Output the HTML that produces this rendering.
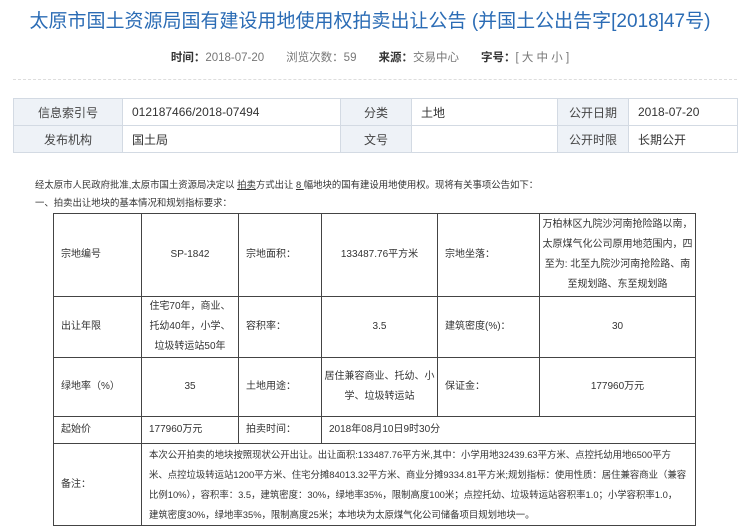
<!DOCTYPE html>
<html><head><meta charset="utf-8"><style>
body{margin:0;width:740px;height:530px;overflow:hidden;background:#fff;font-family:"Liberation Sans","Noto Sans CJK SC",sans-serif;color:#333;position:relative}
.t{position:absolute;left:0;width:740px;top:8px;text-align:center;font-size:19px;color:#2b6cb5;line-height:28px;white-space:nowrap}
.m{position:absolute;left:0;width:740px;top:50px;text-align:center;font-size:11.5px;color:#777;line-height:16px}
.m b{color:#333;font-weight:bold}
.m span{margin-right:22px}
.d{position:absolute;left:13px;width:724px;top:79px;border-top:1px dashed #ddd}
table{border-collapse:collapse;table-layout:fixed;position:absolute}
.a{left:13px;top:98px;width:724px;font-size:12px}
.a td{border:1px solid #d3dae3;height:26px;padding:0 0 0 9px;color:#333}
.a td.l{background:#eef2f7;text-align:center;padding:0;color:#444}
.p{position:absolute;left:35px;font-size:9.4px;line-height:14px;white-space:nowrap}
.b{left:53px;top:213px;width:642px;font-size:10px}
.b td{border:1px solid #444;line-height:20px;padding:0 2px;text-align:center}
.b td.l{text-align:left;padding-left:7px}
</style></head><body>
<div class="t">太原市国土资源局国有建设用地使用权拍卖出让公告 (并国土公出告字[2018]47号)</div>
<div class="m"><span><b>时间：</b>2018-07-20</span><span>浏览次数：59</span><span><b>来源：</b>交易中心</span><b>字号：</b>[ 大 中 小 ]</div>
<div class="d"></div>
<table class="a">
<colgroup><col style="width:109px"><col style="width:218px"><col style="width:71px"><col style="width:146px"><col style="width:71px"><col style="width:109px"></colgroup>
<tr><td class="l">信息索引号</td><td>012187466/2018-07494</td><td class="l">分类</td><td>土地</td><td class="l">公开日期</td><td>2018-07-20</td></tr>
<tr><td class="l">发布机构</td><td>国土局</td><td class="l">文号</td><td></td><td class="l">公开时限</td><td>长期公开</td></tr>
</table>
<div class="p" style="top:178px">经太原市人民政府批准,太原市国土资源局决定以 <u>拍卖</u>方式出让 <u>8 </u>幅地块的国有建设用地使用权。现将有关事项公告如下：</div>
<div class="p" style="top:196px">一、拍卖出让地块的基本情况和规划指标要求：</div>
<table class="b">
<colgroup><col style="width:88px"><col style="width:97px"><col style="width:83px"><col style="width:116px"><col style="width:102px"><col style="width:156px"></colgroup>
<tr style="height:83px"><td class="l">宗地编号</td><td>SP-1842</td><td class="l">宗地面积：</td><td>133487.76平方米</td><td class="l">宗地坐落：</td><td>万柏林区九院沙河南抢险路以南，<br>太原煤气化公司原用地范围内，四<br>至为: 北至九院沙河南抢险路、南<br>至规划路、东至规划路</td></tr>
<tr style="height:61px"><td class="l">出让年限</td><td>住宅70年，商业、<br>托幼40年，小学、<br>垃圾转运站50年</td><td class="l">容积率：</td><td>3.5</td><td class="l">建筑密度(%)：</td><td>30</td></tr>
<tr style="height:59px"><td class="l">绿地率（%）</td><td>35</td><td class="l">土地用途：</td><td>居住兼容商业、托幼、小<br>学、垃圾转运站</td><td class="l">保证金：</td><td>177960万元</td></tr>
<tr style="height:27px"><td class="l">起始价</td><td class="l">177960万元</td><td class="l">拍卖时间：</td><td class="l" colspan="3">2018年08月10日9时30分</td></tr>
<tr style="height:82px"><td class="l">备注：</td><td class="l" colspan="5" style="white-space:nowrap;font-size:9.4px">本次公开拍卖的地块按照现状公开出让。出让面积:133487.76平方米,其中：小学用地32439.63平方米、点控托幼用地6500平方<br>米、点控垃圾转运站1200平方米、住宅分摊84013.32平方米、商业分摊9334.81平方米;规划指标：使用性质：居住兼容商业（兼容<br>比例10%），容积率：3.5，建筑密度：30%，绿地率35%，限制高度100米；点控托幼、垃圾转运站容积率1.0；小学容积率1.0，<br>建筑密度30%，绿地率35%，限制高度25米；本地块为太原煤气化公司储备项目规划地块一。</td></tr>
</table>
</body></html>
